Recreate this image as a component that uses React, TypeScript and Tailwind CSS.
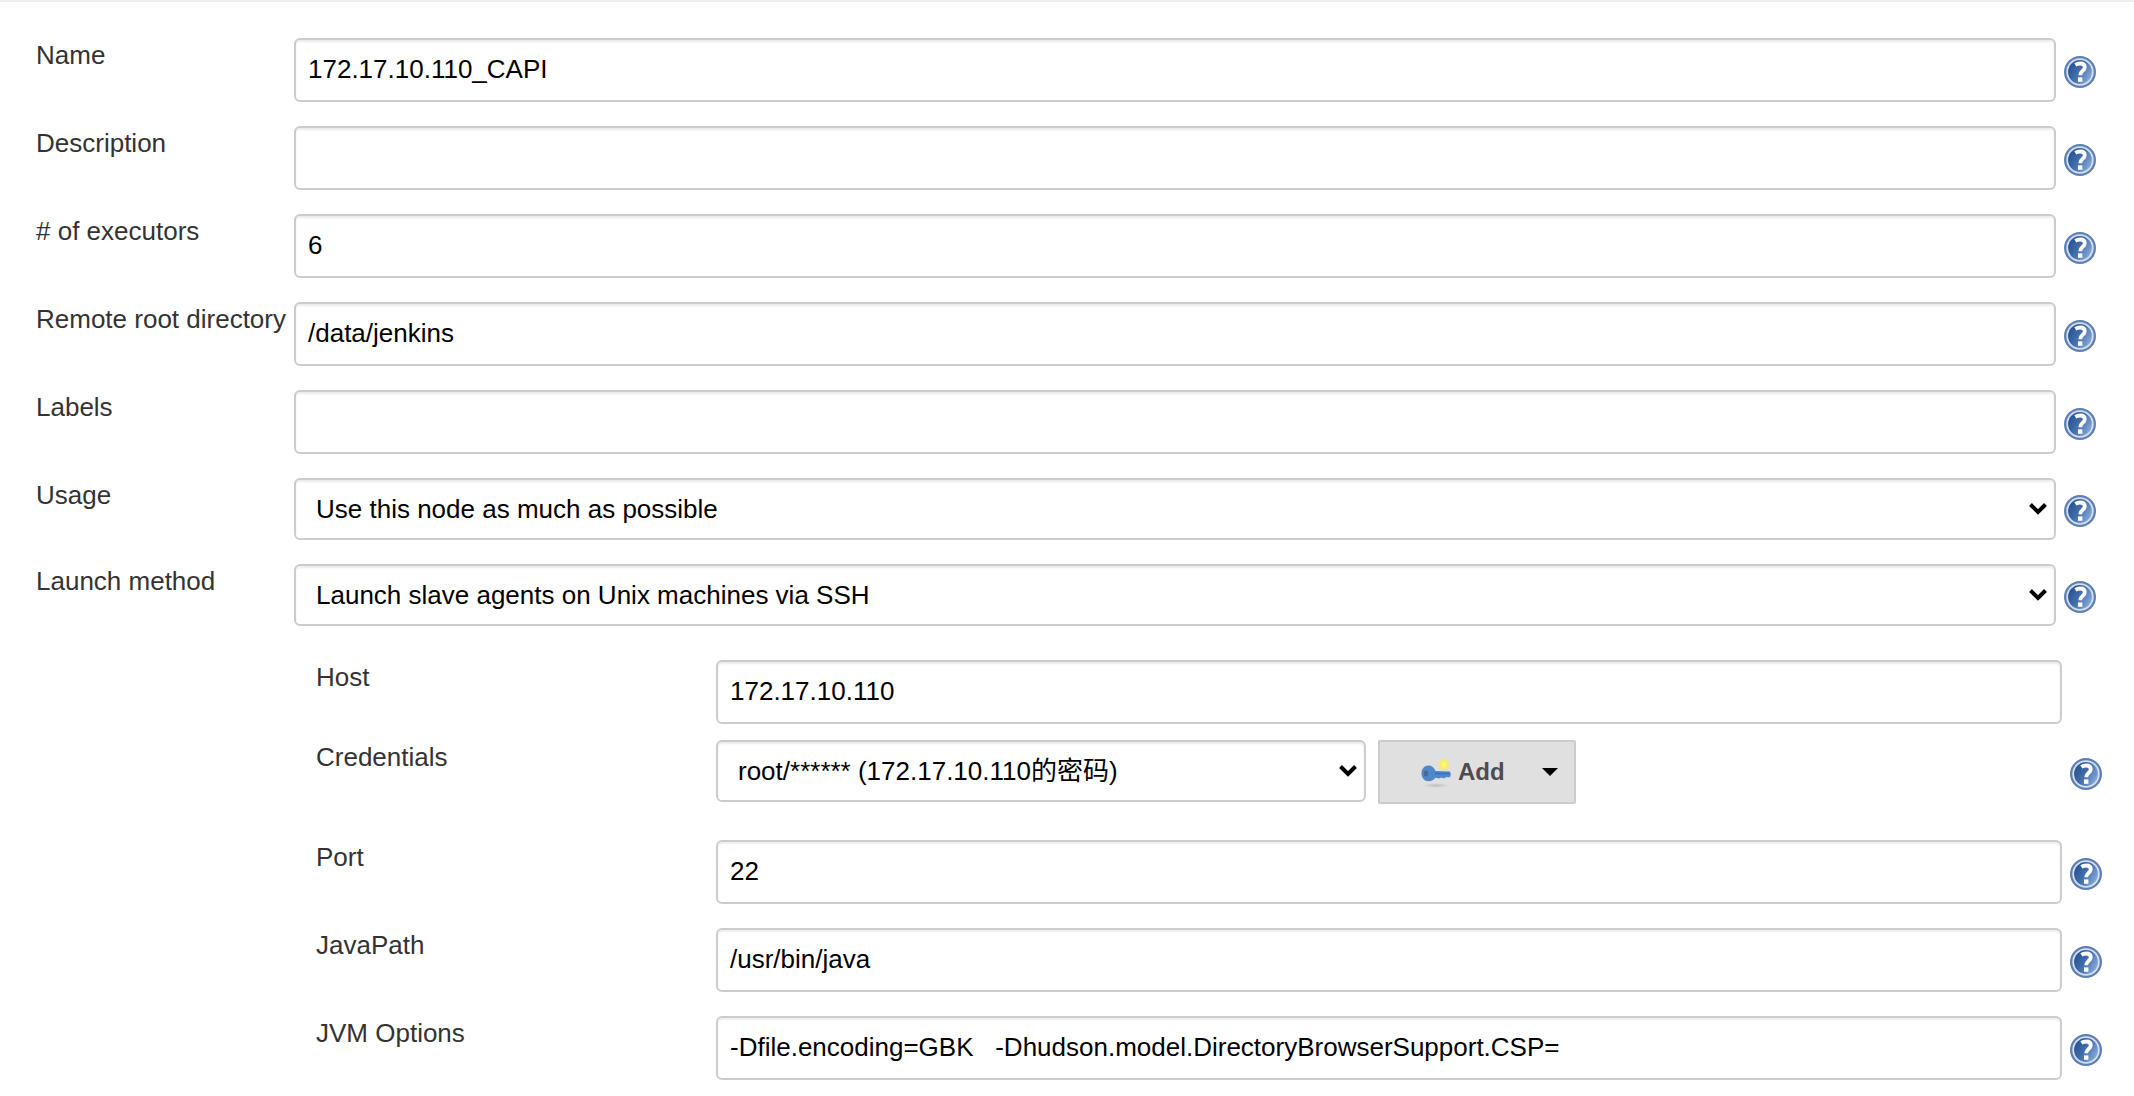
import { useState } from "react";
import type { ReactNode } from "react";

const CONTROL =
  "block w-full rounded-md border-2 border-[#ccc] bg-white text-[26px] leading-[30px] text-black shadow-[inset_0_2px_2px_rgba(0,0,0,0.075)] outline-none focus:border-[#5cb3fd]";

function HelpIcon({ topic }: { topic: string }) {
  return (
    <a href="#help" aria-label={`Help for feature: ${topic}`} className="block h-8 w-8">
      <svg width="32" height="32" viewBox="0 0 32 32" fill="none">
        <defs>
          <linearGradient id="help-disc" x1="6" y1="10" x2="27" y2="22" gradientUnits="userSpaceOnUse">
            <stop offset="0" stopColor="#2a5595" />
            <stop offset="0.45" stopColor="#446fac" />
            <stop offset="1" stopColor="#86a9d6" />
          </linearGradient>
        </defs>
        <circle cx="16" cy="16" r="16" fill="#5f7fb3" />
        <circle cx="16" cy="16" r="13.7" fill="#d3dff0" />
        <circle cx="16" cy="16" r="11.9" fill="url(#help-disc)" />
        <path
          d="M11.4 8.900C12.800 7.900 14.400 7.500 16.200 7.500c3 0 4.600 1.300 4.600 3.700 0 3.600-4.600 3.900-4.600 8"
          stroke="#fff"
          strokeWidth="3.8"
        />
        <rect x="14" y="21.400" width="4.400" height="4.400" fill="#fff" />
      </svg>
    </a>
  );
}

function KeyIcon() {
  return (
    <svg width="32" height="32" viewBox="0 0 32 32" fill="none" aria-hidden="true">
      <defs>
        <radialGradient id="key-spark">
          <stop offset="0" stopColor="#fffb7a" />
          <stop offset="0.7" stopColor="#f8ee5c" />
          <stop offset="1" stopColor="#f8ee5c" stopOpacity="0" />
        </radialGradient>
        <radialGradient id="key-shadow">
          <stop offset="0" stopColor="#bdbdbd" />
          <stop offset="1" stopColor="#bdbdbd" stopOpacity="0" />
        </radialGradient>
      </defs>
      <ellipse cx="16" cy="29.5" rx="13" ry="2.5" fill="url(#key-shadow)" />
      <circle cx="24" cy="8.5" r="5.8" fill="url(#key-spark)" />
      <path
        d="M8.500 9.500c-4 0-7 3.200-7 7.800s3 8 7 8c3 0 5.500-1.300 6.800-3.500l4 .8 2-1.200 2.500 1.200 2-1.400H30l.8-2.400-.8-3.300-14.500-.5c-1.200-3.500-4-5.500-7-5.500z"
        fill="#4f88c8"
      />
      <path d="M15 17.500h15" stroke="#3d70ae" strokeWidth="1.5" />
      <ellipse cx="6" cy="17.5" rx="2.2" ry="3" fill="#416b9c" />
    </svg>
  );
}

function TextInput({ id, initial = "" }: { id: string; initial?: string }) {
  const [value, setValue] = useState(initial);
  return (
    <input
      id={id}
      type="text"
      value={value}
      onChange={(e) => setValue(e.target.value)}
      className={`${CONTROL} h-16 px-3 pt-3.5 pb-4`}
    />
  );
}

function Select({ id, options }: { id: string; options: string[] }) {
  return (
    <div className="relative">
      <select id={id} className={`${CONTROL} h-[62px] appearance-none pr-12 pl-5`}>
        {options.map((option) => (
          <option key={option}>{option}</option>
        ))}
      </select>
      <svg
        className="pointer-events-none absolute top-6 right-2"
        width="20"
        height="14"
        viewBox="0 0 20 14"
        fill="none"
        aria-hidden="true"
      >
        <path d="M2.500 2.500 10 10l7.500-7.500" stroke="#000" strokeWidth="4" />
      </svg>
    </div>
  );
}

type RowProps = { id: string; label: string; help?: boolean; nested?: boolean; children: ReactNode };

function Row({ id, label, help = true, nested = false, children }: RowProps) {
  return (
    <div className="flex items-start">
      <label htmlFor={id} className={`${nested ? "w-[400px]" : "w-[258px]"} shrink-0 pt-0.5 whitespace-nowrap`}>
        {label}
      </label>
      <div className="flex min-w-0 flex-1 items-center gap-2">
        <div className="min-w-0 flex-1">{children}</div>
        <div className="w-8 shrink-0 pt-1">{help && <HelpIcon topic={label} />}</div>
      </div>
    </div>
  );
}

export default function App() {
  return (
    <form
      onSubmit={(e) => e.preventDefault()}
      className="min-h-screen border-t-2 border-[#ebf0ee] bg-white pb-4 font-['Liberation_Sans','Noto_Sans_CJK_SC',sans-serif] text-[26px] leading-[30px] text-[#333]"
    >
      <div className="flex flex-col gap-6 pt-9 pr-[38px] pl-9">
        <Row id="name" label="Name">
          <TextInput id="name" initial="172.17.10.110_CAPI" />
        </Row>
        <Row id="description" label="Description">
          <TextInput id="description" />
        </Row>
        <Row id="executors" label="# of executors">
          <TextInput id="executors" initial="6" />
        </Row>
        <Row id="remote-fs" label="Remote root directory">
          <TextInput id="remote-fs" initial="/data/jenkins" />
        </Row>
        <Row id="labels" label="Labels">
          <TextInput id="labels" />
        </Row>
        <Row id="usage" label="Usage">
          <Select id="usage" options={["Use this node as much as possible"]} />
        </Row>
        <Row id="launcher" label="Launch method">
          <Select id="launcher" options={["Launch slave agents on Unix machines via SSH"]} />
        </Row>
      </div>

      {/* SSH launcher settings */}
      <div className="flex flex-col pt-[34px] pr-8 pl-[316px]">
        <Row nested id="host" label="Host" help={false}>
          <TextInput id="host" initial="172.17.10.110" />
        </Row>
        <div className="pt-4 pb-9">
          <Row nested id="credentials" label="Credentials">
            <div className="flex items-start gap-3">
              <div className="w-[650px]">
                <Select id="credentials" options={["root/****** (172.17.10.110的密码)"]} />
              </div>
              <button
                type="button"
                aria-haspopup="menu"
                className="flex h-16 w-[198px] items-center rounded-xs border-2 border-[#ccc] bg-[#e0e0e0] pr-4 pl-10 text-2xl font-bold text-[#4d4d4d]"
              >
                <KeyIcon />
                <span className="ml-1.5">Add</span>
                <svg className="ml-auto" width="16" height="8" viewBox="0 0 16 8" aria-hidden="true">
                  <path d="M0 0h16L8 8z" fill="#000" />
                </svg>
              </button>
            </div>
          </Row>
        </div>
        <div className="flex flex-col gap-6">
          <Row nested id="port" label="Port">
            <TextInput id="port" initial="22" />
          </Row>
          <Row nested id="java-path" label="JavaPath">
            <TextInput id="java-path" initial="/usr/bin/java" />
          </Row>
          <Row nested id="jvm-options" label="JVM Options">
            <TextInput id="jvm-options" initial="-Dfile.encoding=GBK   -Dhudson.model.DirectoryBrowserSupport.CSP=" />
          </Row>
        </div>
      </div>
    </form>
  );
}
